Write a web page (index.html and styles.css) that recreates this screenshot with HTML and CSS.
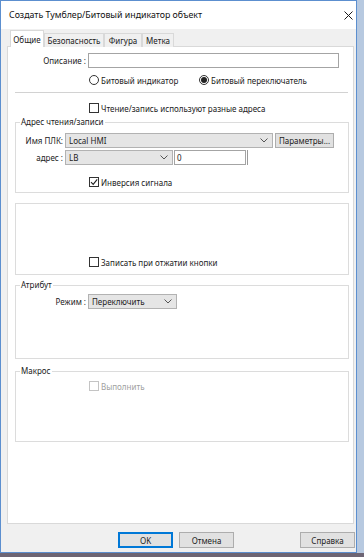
FILE: index.html
```html
<!DOCTYPE html>
<html lang="ru">
<head>
<meta charset="utf-8">
<title>Создать Тумблер/Битовый индикатор объект</title>
<link rel="stylesheet" href="styles.css">
</head>
<body>
<div class="window">
  <div class="titlebar">
    <span class="title">Создать Тумблер/Битовый индикатор объект</span>
    <svg class="close" viewBox="0 0 9 9" width="9" height="9"><path d="M0.5 0.5L8.5 8.5M8.5 0.5L0.5 8.5" stroke="#1a1a1a" stroke-width="1" fill="none"/></svg>
  </div>
  <div class="client">
    <div class="tabs">
      <div class="tab active t1">Общие</div>
      <div class="tab t2">Безопасность</div>
      <div class="tab t3">Фигура</div>
      <div class="tab t4">Метка</div>
    </div>
    <div class="panel">
      <div class="row row-desc">
        <span class="lbl-desc">Описание :</span>
        <div class="edit wide"></div>
      </div>
      <div class="row row-radios">
        <div class="opt first"><span class="radio"></span><span>Битовый индикатор</span></div>
        <div class="opt"><span class="radio on"></span><span>Битовый переключатель</span></div>
      </div>
      <div class="sep"></div>
      <div class="row row-check top-check">
        <span class="cb"></span><span>Чтение/запись используют разные адреса</span>
      </div>

      <fieldset class="group g1">
        <legend>Адрес чтения/записи</legend>
        <div class="row frow plc-row">
          <span class="flbl">Имя ПЛК:</span>
          <div class="combo plc"><span>Local HMI</span><svg class="chev" viewBox="0 0 8 5" width="8" height="5"><path d="M0.5 0.5L4 4L7.5 0.5" stroke="#555" fill="none"/></svg></div>
          <div class="btn-params">Параметры...</div>
        </div>
        <div class="row frow addr-row">
          <span class="flbl">адрес :</span>
          <div class="combo addr"><span>LB</span><svg class="chev" viewBox="0 0 8 5" width="8" height="5"><path d="M0.5 0.5L4 4L7.5 0.5" stroke="#555" fill="none"/></svg></div>
          <div class="edit num">0</div>
          <div class="tick"></div>
        </div>
        <div class="row row-check inv-row">
          <span class="cb"><svg viewBox="0 0 8 8" width="8" height="8"><path d="M1 4.2L3.2 6.4L7.2 1.4" stroke="#222" stroke-width="1.1" fill="none"/></svg></span><span>Инверсия сигнала</span>
        </div>
      </fieldset>

      <fieldset class="group g2">
        <div class="row row-check rel-row">
          <span class="cb"></span><span>Записать при отжатии кнопки</span>
        </div>
      </fieldset>

      <fieldset class="group g3">
        <legend>Атрибут</legend>
        <div class="row frow mode-row">
          <span class="mlbl">Режим :</span>
          <div class="combo mode"><span>Переключить</span><svg class="chev" viewBox="0 0 8 5" width="8" height="5"><path d="M0.5 0.5L4 4L7.5 0.5" stroke="#555" fill="none"/></svg></div>
        </div>
      </fieldset>

      <fieldset class="group g4">
        <legend>Макрос</legend>
        <div class="row row-check macro-row disabled">
          <span class="cb"></span><span>Выполнить</span>
        </div>
      </fieldset>
    </div>
    <div class="buttons">
      <div class="btn default">OK</div>
      <div class="btn cancel">Отмена</div>
      <div class="btn help">Справка</div>
    </div>
  </div>
</div>
</body>
</html>
```
FILE: styles.css
```css
* { box-sizing: border-box; }
html, body { margin: 0; padding: 0; }
body {
  width: 364px;
  height: 557px;
  overflow: hidden;
  background: linear-gradient(to bottom, #b7c9e0 0, #b7c9e0 553px, #6d6574 553px);
  font-family: "Noto Sans", "DejaVu Sans", sans-serif;
  font-size: 8px;
  color: #222;
}
.window {
  width: 357px;
  height: 553px;
  border: 1px solid #5c8fcf;
  background: #f0f0f0;
  display: flex;
  flex-direction: column;
}
.titlebar {
  height: 28px;
  flex: none;
  background: #fff;
  display: flex;
  align-items: center;
  padding-left: 8px;
}
.title { flex: 1; font-size: 8.8px; color: #111; }
.close { margin-right: 3px; }
.client { flex: 1; padding-top: 1px; }
.tabs {
  display: flex;
  align-items: flex-end;
  height: 17px;
  margin-left: 9px;
  margin-bottom: -1px;
}
.tab {
  height: 14px;
  border: 1px solid #d9d9d9;
  border-bottom: none;
  background: #f0f0f0;
  text-align: center;
  line-height: 13px;
}
.tab.active {
  height: 17px;
  background: #fff;
  padding-top: 2px;
  position: relative;
  z-index: 1;
}
.t1 { width: 34px; }
.t2 { width: 60px; }
.t3 { width: 38px; }
.t4 { width: 32px; }
.panel {
  margin-left: 6px;
  width: 347px;
  height: 478px;
  border: 1px solid #d9d9d9;
  background: #fff;
  display: flex;
  flex-direction: column;
}
.row { display: flex; align-items: center; }
.row-desc { height: 15px; margin-top: 6px; }
.lbl-desc { width: 78px; text-align: right; margin-right: 2px; }
.edit { height: 15px; border: 1px solid #a4a4a4; background: #fff; }
.edit.wide { width: 251px; }
.row-radios { height: 12px; margin-top: 6px; padding-left: 81px; }
.opt { display: flex; align-items: center; gap: 2px; }
.opt.first { width: 110px; }
.radio {
  width: 10px; height: 10px;
  border: 1px solid #333;
  border-radius: 50%;
  display: flex; align-items: center; justify-content: center;
  flex: none;
}
.radio.on::after {
  content: "";
  width: 6px; height: 6px;
  border-radius: 50%;
  background: #222;
}
.sep { width: 333px; height: 1px; background: #d2d2d2; margin: 6px 0 0 7px; }
.row-check { height: 12px; gap: 2px; }
.top-check { margin-top: 9px; padding-left: 81px; }
.cb {
  width: 10px; height: 10px;
  border: 1px solid #333;
  background: #fff;
  flex: none;
  display: flex; align-items: center; justify-content: center;
}
.group {
  margin: 0 0 0 7px;
  width: 334px;
  border: 1px solid #dcdcdc;
  padding: 0;
  min-width: 0;
}
legend {
  margin-left: 4px;
  padding: 0 1px;
  height: 12px;
  line-height: 12px;
}
.g1 { margin-top: 2px; padding-bottom: 4px; }
.flbl { width: 47px; text-align: right; margin-right: 2px; }
.frow { height: 15px; }
.plc-row { margin-top: 5px; }
.addr-row { margin-top: 1px; height: 16px; }
.combo {
  height: 15px;
  border: 1px solid #b2b2b2;
  background: #e5e5e5;
  display: flex;
  align-items: center;
  padding-left: 3px;
}
.chev { margin-left: auto; margin-right: 4px; }
.combo.plc { width: 208px; }
.combo.addr { width: 108px; }
.btn-params {
  width: 59px; height: 15px;
  margin-left: 2px;
  border: 1px solid #adadad;
  background: #e1e1e1;
  display: flex; align-items: center; justify-content: center;
}
.edit.num { width: 72px; margin-left: 1px; padding-left: 2px; line-height: 13px; }
.tick { width: 1px; height: 15px; background: #9a9a9a; margin-left: 1px; }
.inv-row { margin-top: 11px; padding-left: 73px; }
.g2 { margin-top: 10px; padding-top: 52px; padding-bottom: 6px; }
.rel-row { padding-left: 73px; }
.g3 { margin-top: 4px; padding-bottom: 49px; }
.mode-row { margin-top: 3px; }
.mlbl { width: 70px; text-align: right; margin-right: 2px; }
.combo.mode { width: 89px; }
.g4 { margin-top: 6px; padding-bottom: 49px; }
.macro-row { margin-top: 3px; padding-left: 73px; }
.disabled { color: #a0a0a0; }
.disabled .cb { border-color: #c4c4c4; }
.buttons { display: flex; margin-top: 8px; }
.btn {
  width: 55px; height: 16px;
  border: 1px solid #adadad;
  background: #e1e1e1;
  display: flex; align-items: center; justify-content: center;
}
.btn.default { border: 2px solid #0078d7; margin-left: 117px; }
.btn.cancel { margin-left: 6px; }
.btn.help { margin-left: 66px; }
```
